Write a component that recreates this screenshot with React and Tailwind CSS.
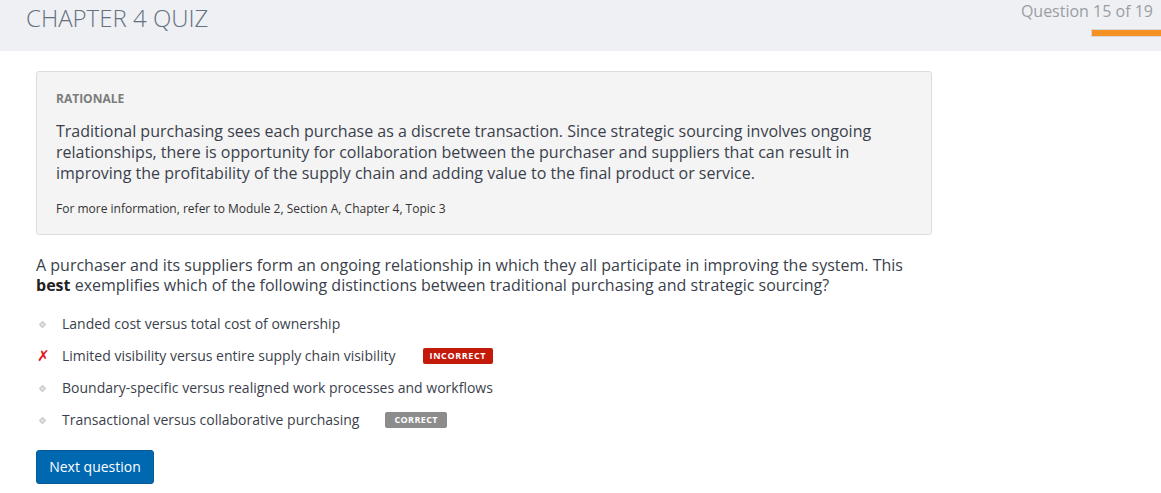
import React from "react";

const options = [
  { text: "Landed cost versus total cost of ownership", mark: null, badge: null },
  { text: "Limited visibility versus entire supply chain visibility", mark: "x", badge: "INCORRECT" },
  { text: "Boundary-specific versus realigned work processes and workflows", mark: null, badge: null },
  { text: "Transactional versus collaborative purchasing", mark: null, badge: "CORRECT" },
];

function Diamond() {
  return (
    <svg width="7" height="7" viewBox="0 0 7 7" className="block">
      <path d="M3.5 0.5 L6.5 3.5 L3.5 6.5 L0.5 3.5 Z" fill="#e2e2e2" stroke="#cbcbcb" strokeWidth="1.2" />
    </svg>
  );
}

export default function App() {
  return (
    <div className="w-[1161px] h-[493px] bg-white overflow-hidden text-[#363c48]" style={{ fontFamily: '"Open Sans", "Noto Sans", sans-serif' }}>
      <div className="h-[51px] bg-[#eff0f4] flex justify-between">
        <div className="pl-[26px] pt-[2px] text-[24px] leading-[32px] font-light text-[#65717e]">CHAPTER 4 QUIZ</div>
        <div className="flex flex-col items-end">
          <div className="pr-[8px] text-[16px] leading-[22px] text-[#9a9ea3]">Question 15 of 19</div>
          <div className="mt-[7px] w-[70px] h-[8px] bg-[#f59122] border border-[#d8d8d8] border-r-0"></div>
        </div>
      </div>

      <div className="pl-[36px] pt-[20px]">
        <div className="w-[896px] h-[164px] bg-[#f4f4f4] border border-[#dcdcdc] rounded-[3px] px-[19px] pt-[19px]">
          <div className="text-[12px] leading-[16px] font-bold text-[#7c7c7c]">RATIONALE</div>
          <p className="mt-[14px] text-[16px] leading-[21px] text-[#3b3f4c] w-[830px]">
            Traditional purchasing sees each purchase as a discrete transaction. Since strategic sourcing involves ongoing relationships, there is opportunity for collaboration between the purchaser and suppliers that can result in improving the profitability of the supply chain and adding value to the final product or service.
          </p>
          <p className="mt-[17px] text-[12px] leading-[16px] text-[#333]">
            For more information, refer to Module 2, Section A, Chapter 4, Topic 3
          </p>
        </div>

        <p className="mt-[20px] w-[880px] text-[16px] leading-[20px] text-[#3b3f4c]">
          A purchaser and its suppliers form an ongoing relationship in which they all participate in improving the system. This <b className="font-bold text-[#222]">best</b> exemplifies which of the following distinctions between traditional purchasing and strategic sourcing?
        </p>

        <div className="mt-[13px] flex flex-col">
          {options.map((o, i) => (
            <div key={i} className="h-[32px] flex items-center">
              <div className="w-[26px] flex items-center pl-[1px]">
                {o.mark === "x" ? (
                  <span className="text-[15px] leading-none font-bold italic text-[#e3141a]" style={{ fontFamily: '"DejaVu Sans", sans-serif' }}>✗</span>
                ) : (
                  <span className="pl-[2px]"><Diamond /></span>
                )}
              </div>
              <span className="text-[14px] leading-[20px] text-[#3b3f4c]">{o.text}</span>
              {o.badge === "INCORRECT" && (
                <span className="ml-[27px] h-[16px] px-[7px] flex items-center bg-[#c41a0c] rounded-[2px] text-[9px] font-bold tracking-[0.6px] text-white">INCORRECT</span>
              )}
              {o.badge === "CORRECT" && (
                <span className="ml-[26px] h-[16px] px-[9px] flex items-center bg-[#8c8c8c] rounded-[2px] text-[9px] font-bold tracking-[0.4px] text-white">CORRECT</span>
              )}
            </div>
          ))}
        </div>

        <button className="mt-[14px] w-[118px] h-[34px] bg-[#0067b1] rounded-[3px] border border-[#0a5a96] text-white text-[14px] leading-[20px]">
          Next question
        </button>
      </div>
    </div>
  );
}
